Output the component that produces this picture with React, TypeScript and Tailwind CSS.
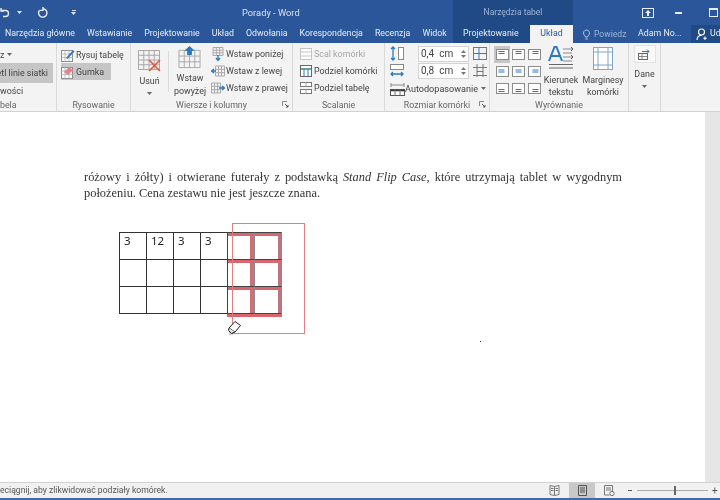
import React from "react";

const BLUE = "#2b79c2";
const GRAY = "#8c8c8c";
const RED = "#e0573f";

function Grid({ w, h, cols, rows, color = GRAY }: { w: number; h: number; cols: number; rows: number; color?: string }) {
  const lines = [];
  for (let i = 0; i <= cols; i++) {
    const x = 0.5 + (i * (w - 1)) / cols;
    lines.push(<line key={"c" + i} x1={x} x2={x} y1={0.5} y2={h - 0.5} stroke={color} strokeWidth={1} />);
  }
  for (let i = 0; i <= rows; i++) {
    const y = 0.5 + (i * (h - 1)) / rows;
    lines.push(<line key={"r" + i} x1={0.5} x2={w - 0.5} y1={y} y2={y} stroke={color} strokeWidth={1} />);
  }
  return <>{lines}</>;
}

function Caret({ color = "#666" }: { color?: string }) {
  return (
    <svg width="5" height="3" viewBox="0 0 5 3" className="shrink-0">
      <path d="M0 0h5L2.5 3z" fill={color} />
    </svg>
  );
}

function Launcher() {
  return (
    <svg width="7" height="7" viewBox="0 0 7 7" className="absolute right-[3px] top-[3px]">
      <path d="M0.5 5V0.5H5" fill="none" stroke="#888" />
      <path d="M3 3l3 3M6 4v2H4" fill="none" stroke="#555" />
    </svg>
  );
}

function SmallIcon({ kind }: { kind: string }) {
  const common = { width: 14, height: 14, viewBox: "0 0 14 14", className: "shrink-0" };
  switch (kind) {
    case "draw":
      return (
        <svg {...common}>
          <rect x="0.5" y="2.5" width="11" height="11" fill="#fff" stroke={GRAY} />
          <path d="M0.5 6h11M0.5 9.5h11M4 2.5v11M8 2.5v11" stroke="#bbb" />
          <path d="M5 10L12 2l1.5 1.5L6.5 11z" fill={BLUE} />
        </svg>
      );
    case "erase":
      return (
        <svg {...common}>
          <rect x="0.5" y="2.5" width="11" height="11" fill="#fff" stroke={GRAY} />
          <path d="M0.5 6h11M0.5 9.5h11M4 2.5v11M8 2.5v11" stroke="#bbb" />
          <path d="M3 7l5-5 4 3-5 5z" fill="#e6818c" />
        </svg>
      );
    case "below":
      return (
        <svg {...common}>
          <g transform="translate(1.5 0)">
            <Grid w={11} h={9} cols={3} rows={3} color="#aaa" />
          </g>
          <path d="M7 8v5M5 11l2 2.5L9 11" fill="none" stroke={BLUE} strokeWidth="1.3" />
        </svg>
      );
    case "left":
      return (
        <svg {...common}>
          <g transform="translate(4 1.5)">
            <Grid w={10} h={11} cols={3} rows={3} color="#aaa" />
          </g>
          <path d="M5 7H0.5M3 5L0.5 7 3 9" fill="none" stroke={BLUE} strokeWidth="1.3" />
        </svg>
      );
    case "right":
      return (
        <svg {...common}>
          <g transform="translate(0 1.5)">
            <Grid w={10} h={11} cols={3} rows={3} color="#aaa" />
          </g>
          <path d="M8 7h5.5M11 5l2.5 2L11 9" fill="none" stroke={BLUE} strokeWidth="1.3" />
        </svg>
      );
    case "merge":
      return (
        <svg {...common}>
          <rect x="1.5" y="1.5" width="11" height="11" fill="#fff" stroke="#c4c4c4" />
          <path d="M1.5 5h11M1.5 9h11" stroke="#c4c4c4" />
        </svg>
      );
    case "split":
      return (
        <svg {...common}>
          <rect x="1.5" y="1.5" width="11" height="11" fill="#fff" stroke="#666" />
          <path d="M1.5 5h11" stroke="#2f8a8a" strokeWidth="1.5" />
          <path d="M5 5v7.5M9 5v7.5" stroke={BLUE} />
        </svg>
      );
    default:
      return (
        <svg {...common}>
          <rect x="1.5" y="1.5" width="11" height="4" fill="#fff" stroke="#777" />
          <rect x="1.5" y="8.5" width="11" height="4" fill="#fff" stroke="#777" />
          <path d="M7 1.5v4M7 8.5v4" stroke="#aaa" />
        </svg>
      );
  }
}

function SmallBtn({ kind, label, muted, active }: { kind: string; label: string; muted?: boolean; active?: boolean }) {
  return (
    <div className={`flex h-[17px] items-center whitespace-nowrap ${active ? "bg-[#c6c6c6]" : ""} ${muted ? "text-[#a6a6a6]" : ""}`}>
      <SmallIcon kind={kind} />
      <span className="ml-[1px]">{label}</span>
    </div>
  );
}

function Group({ w, label, launcher, children }: { w: number; label: string; launcher?: boolean; children: React.ReactNode }) {
  return (
    <div className="flex shrink-0 flex-col border-r border-[#dadada]" style={{ width: w }}>
      <div className="flex h-[55px] pt-[2px]">{children}</div>
      <div className="relative flex h-[13px] items-center justify-center text-[8.8px] text-[#666]">
        {label}
        {launcher ? <Launcher /> : null}
      </div>
    </div>
  );
}

const alignY = [2.5, 4, 6.5];

function Align({ v, h, active }: { v: number; h: number; active?: boolean }) {
  const y = alignY[v];
  const left = [2.5, 3.5, 4.5][h];
  return (
    <div className={`flex h-[17px] w-[16px] items-center justify-center ${active ? "bg-[#c6c6c6]" : ""}`}>
      <svg width="13" height="11" viewBox="0 0 13 11">
        <rect x="0.5" y="0.5" width="12" height="10" fill="#fff" stroke={GRAY} />
        <path d={`M${left} ${y}h6M${left} ${y + 2}h6`} stroke={BLUE} strokeWidth="1" />
      </svg>
    </div>
  );
}

function Spin({ value }: { value: string }) {
  return (
    <div className="flex h-[16px] w-[51px] items-center justify-between border border-[#d4d4d4] bg-white pl-[2px] pr-[2px] text-[10px]">
      <span className="whitespace-pre">{value}</span>
      <span className="flex flex-col gap-[2px]">
        <svg width="5" height="3" viewBox="0 0 5 3"><path d="M0 3h5L2.5 0z" fill="#777" /></svg>
        <Caret color="#777" />
      </span>
    </div>
  );
}

function Cell({ text, cls }: { text?: string; cls: string }) {
  return <div className={`h-[27px] w-[27px] border-l border-t pl-[4px] pt-[1px] text-[11.5px] leading-[14px] text-[#222] ${cls}`} style={{ fontFamily: '"Noto Sans", sans-serif' }}>{text}</div>;
}

const plain = "border-[#333]";
const plainBottom = "border-[#333] border-b h-[28px]";
const redA = "border-l-[#444] border-t-[#444] shadow-[inset_0_3px_0_#d9666c,inset_-4px_0_0_#cf6f76]";
const redB = "w-[28px] border-r border-r-[#8a8a94] border-l-[#8a8a94] border-t-[#444] shadow-[inset_0_3px_0_#d9666c,inset_-3px_0_0_#bd747c]";
const redAb = "h-[28px] border-b border-b-[#444] border-l-[#444] border-t-[#444] shadow-[inset_0_3px_0_#d9666c,inset_-4px_0_0_#cf6f76,0_3px_0_#d9666c]";
const redBb = "h-[28px] w-[28px] border-b border-b-[#444] border-r border-r-[#8a8a94] border-l-[#8a8a94] border-t-[#444] shadow-[inset_0_3px_0_#d9666c,inset_-3px_0_0_#bd747c,0_3px_0_#d9666c]";

export default function App() {
  return (
    <div className="relative flex h-[500px] w-[720px] flex-col overflow-hidden bg-white text-[#444] blur-[0.3px]" style={{ fontFamily: 'Roboto, "Noto Sans", sans-serif' }}>
      {/* header */}
      <div className="flex h-[43px] shrink-0 bg-[#2b579a] text-[8.8px] text-[#e6edf6]">
        <div className="flex w-[453px] shrink-0 flex-col">
          <div className="flex h-[25px] items-center">
            <svg width="12" height="12" viewBox="0 0 12 12" className="ml-[-1px]">
              <path d="M3 3.5h4.5a3 3 0 0 1 0 6H5M3 1v3h3" fill="none" stroke="#e8eef7" strokeWidth="1.4" transform="matrix(1 0 0 1 -1 0)" />
            </svg>
            <span className="ml-[6px]"><Caret color="#dfe8f4" /></span>
            <svg width="12" height="12" viewBox="0 0 12 12" className="ml-[15px]">
              <path d="M2.3 3.5A4.2 4.2 0 1 0 5.5 1.7M6 0v3.4H2.6" fill="none" stroke="#e8eef7" strokeWidth="1.4" />
            </svg>
            <span className="ml-[22px] flex flex-col items-center gap-[1px]">
              <span className="h-[1px] w-[4px] bg-[#dfe8f4]" />
              <Caret color="#dfe8f4" />
            </span>
            <span className="ml-[166px] text-[9.3px] text-[#d8e2f0]">Porady - Word</span>
          </div>
          <div className="flex h-[18px] items-center gap-[12px] whitespace-nowrap pl-[5px]">
            <span>Narzędzia główne</span>
            <span>Wstawianie</span>
            <span>Projektowanie</span>
            <span>Układ</span>
            <span>Odwołania</span>
            <span>Korespondencja</span>
            <span>Recenzja</span>
            <span>Widok</span>
          </div>
        </div>
        <div className="flex w-[120px] shrink-0 flex-col bg-[#1f4a85]">
          <div className="flex h-[25px] items-center justify-center text-[8.5px] text-[#9db5d6]">Narzędzia tabel</div>
          <div className="flex h-[18px] items-center whitespace-nowrap pl-[10px]">
            <span className="w-[67px]">Projektowanie</span>
            <span className="flex h-[18px] w-[43px] items-center justify-center bg-[#f3f3f3] text-[#2b579a]">Układ</span>
          </div>
        </div>
        <div className="flex min-w-0 flex-1 flex-col overflow-hidden">
          <div className="flex h-[25px] items-center pl-[69px]">
            <svg width="12" height="10" viewBox="0 0 12 10" className="shrink-0">
              <rect x="0.5" y="0.5" width="11" height="9" fill="none" stroke="#e8eef7" />
              <path d="M6 2l3 3H7v3H5V5H3z" fill="#e8eef7" />
            </svg>
            <span className="ml-[21px] h-[2px] w-[7px] shrink-0 bg-[#e8eef7]" />
            <span className="ml-[27px] h-[9px] w-[9px] shrink-0 border border-t-2 border-[#e8eef7]" />
          </div>
          <div className="flex h-[18px] items-center whitespace-nowrap">
            <svg width="9" height="13" viewBox="0 0 9 13" className="ml-[9px] shrink-0">
              <path d="M1.5 5a3 3 0 1 1 5 2.3c-.7.6-.8 1.2-.8 1.7H3.3c0-.5-.1-1.1-.8-1.7A3 3 0 0 1 1.5 5zM3.3 11h2.400" fill="none" stroke="#b9cbe3" />
            </svg>
            <span className="ml-[3px] w-[44px] text-[8.6px] text-[#9db5d6]">Powiedz</span>
            <span className="w-[53px]">Adam No...</span>
            <span className="flex h-[18px] w-[29px] items-center overflow-hidden bg-[#1f4a85] pl-[5px]">
              <svg width="12" height="13" viewBox="0 0 12 13" className="shrink-0">
                <circle cx="5.5" cy="4" r="3" fill="none" stroke="#fff" strokeWidth="1.1" />
                <path d="M1 12c0-3 2-4.500 4.500-4.500M9 8.500v3.500M7.300 10.200h3.400" fill="none" stroke="#fff" strokeWidth="1.1" />
              </svg>
              <span className="ml-[2px]">Ud</span>
            </span>
          </div>
        </div>
      </div>

      {/* ribbon */}
      <div className="flex h-[69px] shrink-0 overflow-hidden border-b border-[#d2d2d2] bg-[#f3f3f3] text-[8.9px] leading-[12px] text-[#444]">
        <div className="flex w-[57px] shrink-0 flex-col border-r border-[#dadada]">
          <div className="flex h-[55px] flex-col items-start pt-[3px] whitespace-nowrap">
            <div className="flex h-[17px] items-center gap-[3px]"><span>z</span><Caret /></div>
            <div className="flex h-[20px] w-[53px] items-center justify-end bg-[#c6c6c6] pr-[5px]">etl linie siatki</div>
            <div className="flex h-[15px] items-center">wości</div>
          </div>
          <div className="flex h-[13px] items-center text-[8.8px] text-[#666]">bela</div>
        </div>

        <Group w={74} label="Rysowanie">
          <div className="flex flex-col pl-[4px] pt-[1px]">
            <SmallBtn kind="draw" label="Rysuj tabelę" />
            <div className="w-[50px]"><SmallBtn kind="erase" label="Gumka" active /></div>
          </div>
        </Group>

        <Group w={162} label="Wiersze i kolumny" launcher>
          <div className="flex w-[37px] flex-col items-center pt-[5px]">
            <svg width="24" height="23" viewBox="0 0 24 23">
              <Grid w={22} h={20} cols={4} rows={4} color="#a8a8a8" />
              <path d="M11 10l11 11M22 10L11 21" stroke={RED} strokeWidth="1.6" />
            </svg>
            <span className="mt-[2px]">Usuń</span>
            <span className="mt-[5px]"><Caret /></span>
          </div>
          <div className="my-[6px] w-[1px] bg-[#dadada]" />
          <div className="flex w-[42px] flex-col items-center text-center leading-[13px]">
            <svg width="24" height="24" viewBox="0 0 24 24" className="mt-[1px]">
              <g transform="translate(0 4)"><Grid w={23} h={19} cols={4} rows={3} color="#a8a8a8" /></g>
              <path d="M9 0.500h5V5h3l-5.500 5L6 5h3z" fill={BLUE} transform="rotate(180 11.5 5)" />
            </svg>
            <span className="mt-[3px]">Wstaw powyżej</span>
          </div>
          <div className="flex flex-col whitespace-nowrap">
            <SmallBtn kind="below" label="Wstaw poniżej" />
            <SmallBtn kind="left" label="Wstaw z lewej" />
            <SmallBtn kind="right" label="Wstaw z prawej" />
          </div>
        </Group>

        <Group w={92} label="Scalanie">
          <div className="flex flex-col whitespace-nowrap pl-[6px]">
            <SmallBtn kind="merge" label="Scal komórki" muted />
            <SmallBtn kind="split" label="Podziel komórki" />
            <SmallBtn kind="table" label="Podziel tabelę" />
          </div>
        </Group>

        <Group w={105} label="Rozmiar komórki" launcher>
          <div className="flex flex-col pl-[5px]">
            <div className="flex h-[17px] items-center">
              <svg width="14" height="15" viewBox="0 0 14 15" className="shrink-0">
                <path d="M3 1v13M1 3l2-2 2 2M1 12l2 2 2-2" fill="none" stroke={BLUE} strokeWidth="1.3" />
                <rect x="8.5" y="1.500" width="5" height="12" fill="#fff" stroke="#888" />
              </svg>
              <span className="ml-[14px]"><Spin value="0,4  cm" /></span>
              <svg width="14" height="13" viewBox="0 0 14 13" className="ml-[4px] shrink-0">
                <rect x="0.5" y="0.5" width="13" height="12" fill="none" stroke="#777" />
                <path d="M0.5 6.500h13M6 0.500v12" stroke="#2f7fbf" />
              </svg>
            </div>
            <div className="flex h-[17px] items-center">
              <svg width="14" height="15" viewBox="0 0 14 15" className="shrink-0">
                <rect x="0.5" y="1.500" width="13" height="5" fill="#fff" stroke="#888" />
                <path d="M1 11h12M3 9l-2 2 2 2M11 9l2 2-2 2" fill="none" stroke={BLUE} strokeWidth="1.3" />
              </svg>
              <span className="ml-[14px]"><Spin value="0,8  cm" /></span>
              <svg width="14" height="13" viewBox="0 0 14 13" className="ml-[4px] shrink-0">
                <path d="M0 3.500h14M0 11.500h14M4 0v13M10 0v13M4 7.500h6" fill="none" stroke="#777" />
              </svg>
            </div>
            <div className="mt-[1px] flex h-[17px] items-center whitespace-nowrap">
              <svg width="15" height="14" viewBox="0 0 15 14" className="shrink-0">
                <path d="M1 3h13M1 1v4M14 1v4" stroke="#888" fill="none" />
                <rect x="0.5" y="7.500" width="14" height="6" fill="#fff" stroke="#555" />
                <path d="M0.500 8.500h14" stroke="#333" strokeWidth="1.5" />
                <path d="M5 7.500v6M10 7.500v6" stroke="#777" />
              </svg>
              <span className="text-[9.1px]">Autodopasowanie</span>
              <span className="ml-[3px]"><Caret /></span>
            </div>
          </div>
        </Group>

        <Group w={139} label="Wyrównanie">
          <div className="grid w-[52px] shrink-0 grid-cols-[repeat(3,16px)] grid-rows-[repeat(3,17px)] pl-[4px] pt-[1px]">
            <Align v={0} h={0} active />
            <Align v={0} h={1} />
            <Align v={0} h={2} />
            <Align v={1} h={0} />
            <Align v={1} h={1} />
            <Align v={1} h={2} />
            <Align v={2} h={0} />
            <Align v={2} h={1} />
            <Align v={2} h={2} />
          </div>
          <div className="flex w-[38px] shrink-0 flex-col items-center text-center leading-[12px]">
            <svg width="26" height="27" viewBox="0 0 26 27" className="shrink-0">
              <path d="M15 4h9M15 8h9M15 12h9M15 16h9" stroke="#888" />
              <path d="M1 19.500h24M1 23h24" stroke="#666" />
              <path d="M23 2l2 2-2 2M23 10l2 2-2 2" fill="none" stroke="#555" />
              <path d="M1 16L6.500 2h2L14 16M3.500 11h8" fill="none" stroke={BLUE} strokeWidth="2" />
            </svg>
            <span className="mt-[2px]">Kierunek tekstu</span>
          </div>
          <div className="flex w-[46px] shrink-0 flex-col items-center text-center leading-[12px]">
            <svg width="20" height="24" viewBox="0 0 20 24" className="mt-[2px] shrink-0">
              <rect x="0.5" y="0.500" width="19" height="22" fill="#fff" stroke="#7fa6c8" />
              <path d="M5 0.500v22M15 0.500v22M0.500 5h19M0.500 18h19" stroke="#7fa6c8" />
            </svg>
            <span className="mt-[3px]">Marginesy komórki</span>
          </div>
        </Group>

        <Group w={32} label="">
          <div className="flex w-full flex-col items-center">
            <div className="flex h-[18px] w-[22px] items-center justify-center border border-[#e2e2e2] bg-[#f8f8f8]">
              <svg width="13" height="12" viewBox="0 0 13 12">
                <rect x="0.5" y="5.500" width="9" height="6" fill="#fff" stroke="#666" />
                <path d="M0.500 8.500h9M4 5.500v6" stroke="#888" />
                <path d="M4 3.500h7M9 1.500l2 2-2 2" fill="none" stroke={BLUE} />
              </svg>
            </div>
            <span className="mt-[5px]">Dane</span>
            <span className="mt-[5px]"><Caret /></span>
          </div>
        </Group>
      </div>

      {/* document */}
      <div className="flex min-h-0 flex-1">
        <div className="relative flex-1 overflow-hidden bg-white pl-[84px] pr-[83px] pt-[57px]">
          <p className="text-justify text-[12.4px] leading-[16px] text-[#333]" style={{ fontFamily: '"Liberation Serif", serif' }}>
            różowy i żółty) i otwierane futerały z podstawką <i>Stand Flip Case</i>, które utrzymają tablet w wygodnym położeniu. Cena zestawu nie jest jeszcze znana.
          </p>
          <div className="relative ml-[35px] mt-[31px] w-[163px]">
            <div className="grid grid-cols-[repeat(5,27px)_28px]">
              <Cell text="3" cls={plain} />
              <Cell text="12" cls={plain} />
              <Cell text="3" cls={plain} />
              <Cell text="3" cls={plain} />
              <Cell cls={redA} />
              <Cell cls={redB} />
              <Cell cls={plain} />
              <Cell cls={plain} />
              <Cell cls={plain} />
              <Cell cls={plain} />
              <Cell cls={redA} />
              <Cell cls={redB} />
              <Cell cls={plainBottom} />
              <Cell cls={plainBottom} />
              <Cell cls={plainBottom} />
              <Cell cls={plainBottom} />
              <Cell cls={redAb} />
              <Cell cls={redBb} />
            </div>
            <div className="absolute left-[113px] top-[-9px] h-[111px] w-[73px] border border-[#e07f7f]" />
            <svg width="15" height="16" viewBox="0 0 15 16" className="absolute left-[108px] top-[88px]">
              <path d="M2 8l6-6.500 5.500 4-5.500 6.500z" fill="#fff" stroke="#222" />
              <path d="M2 8l-.5 2.500L4.500 13.500 8 12" fill="#ddd" stroke="#222" />
              <path d="M3 12.500l0 2.500M5 13.500l0 2" stroke="#444" strokeDasharray="1 1" />
            </svg>
          </div>
          <span className="absolute left-[480px] top-[229px] h-[1px] w-[1px] bg-[#333]" />
        </div>
        <div className="w-[15px] shrink-0 bg-[#e6e6e6]" />
      </div>

      {/* status */}
      <div className="flex h-[16px] shrink-0 items-center border-t border-[#d2d2d2] bg-[#f1f1f1] text-[8.6px] text-[#555]">
        <span className="w-[549px] shrink-0 whitespace-nowrap">eciągnij, aby zlikwidować podziały komórek.</span>
        <svg width="11" height="11" viewBox="0 0 11 11" className="shrink-0">
          <path d="M5.5 1.500L1 .5v9l4.500 1 4.500-1v-9zM5.500 1.500v9M2 3.500h2.500M2 5.500h2.500M6.500 3.500H9M6.500 5.500H9" fill="none" stroke="#777" />
        </svg>
        <span className="ml-[9px] flex h-[15px] w-[26px] shrink-0 items-center justify-center bg-[#c8c8c8]">
          <svg width="9" height="11" viewBox="0 0 9 11">
            <path d="M.5.500h8v10h-8zM2 3h5M2 5h5M2 7h5" fill="none" stroke="#555" />
          </svg>
        </span>
        <svg width="11" height="11" viewBox="0 0 11 11" className="ml-[9px] shrink-0">
          <path d="M.5.500h8v6M.5.500v9.500h5M2 3h5M2 5h5" fill="none" stroke="#777" />
          <circle cx="8" cy="8.500" r="2.200" fill="none" stroke="#777" />
        </svg>
        <span className="ml-[13px] h-[1px] w-[4px] shrink-0 bg-[#555]" />
        <span className="relative ml-[5px] h-[1px] w-[71px] shrink-0 bg-[#aaa]">
          <span className="absolute left-[37px] top-[-4px] h-[9px] w-[2px] bg-[#666]" />
        </span>
        <span className="ml-[4px] shrink-0 text-[10px] leading-none text-[#555]">+</span>
      </div>
      <div className="h-[2px] shrink-0 bg-[#3f6aa5]" />
    </div>
  );
}
